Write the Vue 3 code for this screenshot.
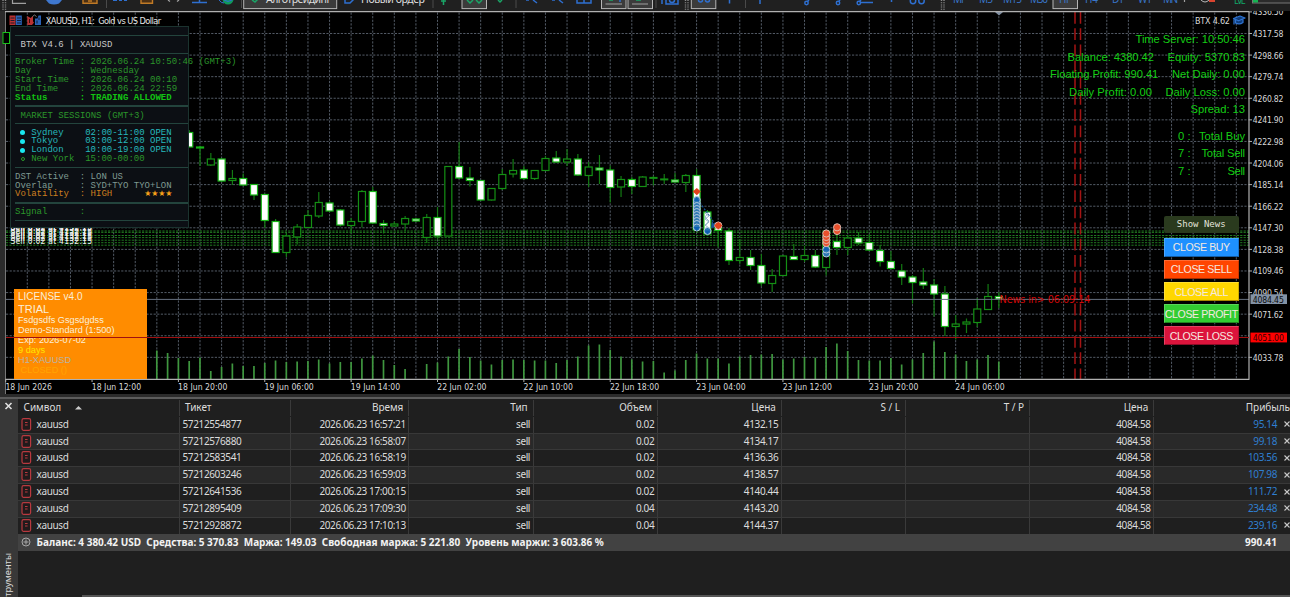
<script setup>
const GRID = 21.59
const LEFT = 5.7
const STEP = GRID / 2
const vLines = Array.from({ length: 57 }, (_, k) => LEFT + GRID * (k + 1))
const hLines = Array.from({ length: 17 }, (_, k) => 11.9 + GRID * k).slice(1)

const priceLabels = [
  '4336.50', '4317.58', '4298.66', '4279.74', '4260.82', '4241.90', '4222.98', '4204.06', '4185.14',
  '4166.22', '4147.30', '4128.38', '4109.46', '4090.54', '4071.62', '', '4033.78',
].map((text, k) => ({ text, y: 11.9 + GRID * k })).filter((p) => p.text)

const timeLabels = [
  '18 Jun 2026', '18 Jun 12:00', '18 Jun 20:00', '19 Jun 06:00', '19 Jun 14:00', '22 Jun 02:00',
  '22 Jun 10:00', '22 Jun 18:00', '23 Jun 04:00', '23 Jun 12:00', '23 Jun 20:00', '24 Jun 06:00',
].map((text, k) => ({ text, x: LEFT + GRID * 4 * k, w: k ? 49.3 : 46.5 }))

// [filled, high, bodyTop, bodyBottom, low]
const candles = [
  [1, 130, 132.5, 147, 147], [1, 146, 147, 148, 166], [0, 153, 159, 165, 166], [1, 158.5, 159, 181, 182],
  [0, 170, 178.5, 180.5, 185], [1, 173.5, 178.5, 185, 186], [1, 184, 184.5, 195, 200], [1, 194, 194.5, 220.5, 228],
  [1, 219, 221.5, 252.5, 253], [0, 233, 236, 252.5, 257], [0, 224, 227, 237, 244.5], [0, 210, 215.5, 227.5, 228],
  [0, 192, 202.5, 216, 218], [1, 201, 203, 211, 212], [1, 209, 210, 225, 226.5], [0, 218, 221.5, 225.5, 233.5],
  [0, 190, 191.5, 221.5, 227.5], [1, 187, 191.5, 223, 224], [1, 220, 223.5, 225.5, 233.5], [0, 221.5, 224, 226, 226.5],
  [0, 216, 218.5, 224, 231], [1, 218, 219, 221, 221.5], [0, 214, 217.5, 237.5, 243], [1, 207, 217.5, 236, 239],
  [0, 166, 166.5, 236, 236], [1, 142, 166.5, 178, 179], [1, 167, 178, 180.5, 186.5], [1, 180, 180.5, 200, 200.5],
  [0, 188, 188.5, 200, 200.5], [0, 169, 174.5, 188.5, 190], [0, 159, 170.5, 174, 177.5], [1, 166, 170, 178.5, 180],
  [0, 170, 170.5, 178.5, 180], [0, 156, 158.5, 170.5, 171], [1, 151, 158, 162, 163], [0, 149, 159, 162, 166],
  [1, 154, 159, 175, 176], [0, 162, 167, 175.5, 187], [1, 155, 168, 170, 184], [1, 165.5, 170, 187.5, 202.5],
  [0, 176, 179.5, 187, 197], [1, 177, 179.5, 186.5, 194], [0, 176, 177, 186.5, 187], [0, 176, 177.5, 178.3, 185.5],
  [0, 174, 179, 179.8, 184], [1, 173, 180, 182, 182.5], [0, 174, 175.5, 182.5, 192], [1, 169, 175.5, 230, 230],
  [1, 210, 212, 234, 235], [1, 225, 228, 230.5, 247.5], [1, 228, 231, 260.5, 265], [0, 239, 257.5, 260.5, 264],
  [1, 250, 257.5, 265.5, 270], [1, 254, 265.5, 283, 286], [0, 269, 275.5, 283.5, 292], [0, 255, 256, 275.5, 276],
  [1, 244, 256.5, 259.5, 260], [0, 246, 255.5, 259.5, 262], [1, 250, 255.5, 267, 268], [0, 230, 240, 267.5, 275.5],
  [1, 234, 241.5, 247.5, 255], [0, 235, 238, 247.5, 255], [1, 232, 238, 243, 245], [1, 234, 242.5, 250, 251],
  [1, 245, 250.5, 261.5, 266.5], [1, 251, 261.5, 268.5, 269], [1, 264, 271, 277, 285], [1, 275, 277, 282.5, 303.5],
  [1, 268, 282, 285, 289], [1, 279, 285, 294, 316.5], [1, 286, 294, 326.5, 336], [0, 315, 324, 326.5, 339.5],
  [0, 318.5, 322, 324, 333], [0, 298, 309, 322.5, 327], [0, 284, 296.5, 309.5, 310], [1, 292, 296.5, 299, 308],
].map(([fill, hi, top, bot, lo], i) => ({ fill, hi, top, bot, lo, x: 189.25 + STEP * i }))

const volumes = [
  350.5, 353, 358, 361, 357.5, 371, 367, 363.5, 366, 366, 363, 360.5, 362, 361.5, 361, 359.5, 363.5, 362, 362,
  358.5, 355.5, 360, 365, 369, 379, 364, 362.5, 356.5, 349, 357, 360.5, 364.5, 360, 359.5, 360, 360.5, 360.5, 363,
  360, 356.5, 345.5, 344.5, 350, 356.5, 359.5, 361.5, 361, 372.5, 370.5, 360, 353.5, 358.5, 358.5, 363.5, 356.5,
  355, 354.5, 354, 359.5, 358.5, 357, 357.5, 347, 343.5, 351, 360, 360.5, 360.5, 358, 364.5, 359.5, 353, 341.5,
  352, 354.5, 361, 359.5, 355, 361.5,
].map((y, i) => ({ y, x: 156.8 + STEP * i }))

const levels = [231, 232.4, 235.5, 237.6, 240.2, 242.7, 245.2]

const blueMarks = [
  ...[200, 203, 206, 209, 212, 215, 218, 221, 224, 227.5].map((y) => ({ x: 696.8, y })),
  { x: 707.5, y: 231 }, { x: 826.3, y: 253.5 }, { x: 826.3, y: 249.5 },
]
const redMarks = [
  ...[243, 240, 237, 233.5].map((y) => ({ x: 826.3, y })),
  { x: 837.1, y: 231 }, { x: 837.1, y: 227.3 }, { x: 718.3, y: 225.6 },
]

const stats = [
  ['Time Server: 10:50:46', 1135.5, 1245, 39], ['Balance: 4380.42', 1067.5, 1154, 56.6],
  ['Equity: 5370.83', 1167.5, 1245, 56.6], ['Floating Profit: 990.41', 1050, 1158.3, 74.2],
  ['Net Daily: 0.00', 1172, 1245, 74.2], ['Daily Profit: 0.00', 1069, 1152, 91.8],
  ['Daily Loss: 0.00', 1165.5, 1245, 91.8], ['Spread: 13', 1190.5, 1245, 109.4],
  ['0 :', 1178, 1190.5, 135.6], ['Total Buy', 1199, 1245, 135.6], ['7 :', 1178, 1190.5, 153.2],
  ['Total Sell', 1201.5, 1245, 153.2], ['7 :', 1178, 1190.5, 170.8], ['Sell', 1227.5, 1245, 170.8],
].map(([text, x, end, y]) => ({ text, x, w: end - x, y: y + 4 }))

const timeframes = [
  ['M1', 953, 12], ['M5', 979, 14], ['M15', 1003, 19], ['M30', 1030, 18], ['H1', 1059, 11],
  ['H4', 1085, 13], ['D1', 1112, 12], ['W1', 1138, 14], ['MN', 1163, 15],
]

const field = (label, value) => label.padEnd(12) + ': ' + value
const chartTitle = 'XAUUSD, H1:  Gold vs US Dollar'
const brokerLines = [
  field('Broker Time', '2026.06.24 10:50:46 (GMT+3)'), field('Day', 'Wednesday'),
  field('Start Time', '2026.06.24 00:10'), field('End Time', '2026.06.24 22:59'),
]
const statusLine = field('Status', 'TRADING ALLOWED')
const dstLines = [field('DST Active', 'LON US'), field('Overlap', 'SYD+TYO TYO+LON')]
const volatilityLine = field('Volatility', 'HIGH')
const signalLine = field('Signal', '')
const totals = [
  'Баланс: 4 380.42 USD', 'Средства: 5 370.83', 'Маржа: 149.03', 'Свободная маржа: 5 221.80', 'Уровень маржи: 3 603.86 %',
].join('  ')

const sessions = [
  { name: 'Sydney', hours: '02:00-11:00 OPEN', open: true },
  { name: 'Tokyo', hours: '03:00-12:00 OPEN', open: true },
  { name: 'London', hours: '10:00-19:00 OPEN', open: true },
  { name: 'New York', hours: '15:00-00:00', open: false },
]

const actions = [
  ['CLOSE BUY', 'blue'], ['CLOSE SELL', 'orange'], ['CLOSE ALL', 'yellow'], ['CLOSE PROFIT', 'green'], ['CLOSE LOSS', 'crimson'],
]

const headers = ['Символ', 'Тикет', 'Время', 'Тип', 'Объем', 'Цена', 'S / L', 'T / P', 'Цена', 'Прибыль']
const rows = [
  ['57212554877', '2026.06.23 16:57:21', '0.02', '4132.15', '95.14'],
  ['57212576880', '2026.06.23 16:58:07', '0.02', '4134.17', '99.18'],
  ['57212583541', '2026.06.23 16:58:19', '0.02', '4136.36', '103.56'],
  ['57212603246', '2026.06.23 16:59:03', '0.02', '4138.57', '107.98'],
  ['57212641536', '2026.06.23 17:00:15', '0.02', '4140.44', '111.72'],
  ['57212895409', '2026.06.23 17:09:30', '0.04', '4143.20', '234.48'],
  ['57212928872', '2026.06.23 17:10:13', '0.04', '4144.37', '239.16'],
]
</script>

<template>
  <div class="app">
    <svg class="toolbar" width="1290" height="11" viewBox="0 0 1290 11">
      <g fill="none" stroke="#8c8c8c" stroke-width="1.4" stroke-dasharray="1 1.2">
        <path d="M3 0V10M5.5 0V10M685.5 0V10M688 0V10M941.5 0V10M944 0V10" />
      </g>
      <path d="M106.5 0V8M241.5 0V8M433 0V8M516 0V8M656 0V8M745.5 0V8" stroke="#4a4a4a" />
      <g fill="#3b3b3b" stroke="#b5b5b5">
        <rect x="243.7" y="-3" width="93" height="11.6" />
        <rect x="462" y="-3" width="24.5" height="11.6" />
        <rect x="601.5" y="-3" width="24.5" height="11.6" />
        <rect x="628" y="-3" width="24.5" height="11.6" />
        <rect x="691.3" y="-3" width="24.5" height="11.6" />
        <rect x="1053" y="-3" width="24.5" height="11.6" />
      </g>
      <g fill="none" stroke="#a0a0a0" stroke-width="1.2">
        <path d="M12.5 0V3.3H26M168 0l2 1.5M179 0l-2 1.5M605.5 4H622M632 4H648M1184.5 0V2" />
      </g>
      <path d="M46 0H62L59 3.5Q54 5.5 49 3.5Z" fill="#3f78cf" />
      <g fill="#4c3013" stroke="#c07a26" stroke-width="1.4">
        <path d="M83 -2H97V3.3H83ZM141 -2H152.5V3.3H141ZM88 1H92" />
      </g>
      <g fill="none" stroke="#2e6fd0" stroke-width="1.5">
        <path d="M113 .3H117M119 .3H122M124 .3H127M192 2.5H207M199.5 0V2.5M345 -2V3H350L355 -2M526 0H529M533 0l4 3M552 0H555M559 0l4 3M577 -2V3H591V-2M584 -2V3M620 0V2M662 0V4M666 -2V4H678V-2ZM729.5 0V3.5M760 0V4M860 2.5H873M891.5 0V2" />
        <circle cx="672" cy="0" r="2.5" /><circle cx="700.5" cy="0" r="2" /><circle cx="707.5" cy="0" r="2" />
        <circle cx="806.5" cy="3" r="1.7" /><path d="M807.5 1.5L809 0M838.8 1.5L840 0M859.5 1.5L861 0" />
        <circle cx="838" cy="3" r="1.7" /><circle cx="858.8" cy="3" r="1.7" />
        <circle cx="913" cy="1" r="2.7" /><circle cx="921.5" cy="1" r="2.7" />
      </g>
      <g fill="none" stroke="#1aa567" stroke-width="1.5">
        <path d="M252 0L255 2L258 -1M441 1H446M443.5 0V5M467 0l3 3l3 -3M476 0l3 3l3 -3M498 0l2 2l2 -2M609 0H613M636 0H641M651 0" />
      </g>
      <circle cx="228" cy="-1" r="5.5" fill="#10985d" /><path d="M219 0q2 3 5 3M224 0q4 3 8 0" fill="none" stroke="#2e6fd0" />
      <path d="M1201 0q4 4 8 0" fill="none" stroke="#b7b7b7" /><path d="M1209 1H1215" stroke="#d9442f" stroke-width="2" />
      <rect x="1252.5" y="-3" width="44" height="6" fill="#2b2b2b" stroke="#777" /><rect x="1253" y="0" width="5" height="2.5" fill="#16b452" />
      <g class="ui-text">
        <text x="266" y="3" textLength="65" fill="#dedede" font-size="10.5">Алготрейдинг</text>
        <text x="361" y="3" textLength="64" fill="#dedede" font-size="10.5">Новый ордер</text>
        <text v-for="[t, x, w] in timeframes" :key="t" :x="x" y="2.6" :textLength="w" fill="#3975c8" font-size="10">{{ t }}</text>
        <text x="1234" y="3.5" textLength="11.5" fill="#12a868" font-size="9">LVL</text>
      </g>
    </svg>

    <section class="chart">
      <svg class="plot" width="1290" height="386" viewBox="0 11 1290 386">
        <g class="grid">
          <line v-for="x in vLines" :key="x" :x1="x" :x2="x" y1="12.5" y2="379" />
          <line v-for="y in hLines" :key="y" x1="6" x2="1249" :y1="y" :y2="y" />
        </g>
        <g stroke="#217a21" stroke-width="1" stroke-dasharray="2.2 1.2">
          <line v-for="y in levels" :key="y" x1="6" x2="1249" :y1="y" :y2="y" />
        </g>
        <g stroke="#3f973f" stroke-width="1.7">
          <line v-for="v in volumes" :key="v.x" :x1="v.x" :x2="v.x" :y1="v.y" y2="379" />
        </g>
        <g stroke="#137a13" stroke-width="1.2">
          <g v-for="c in candles" :key="c.x">
            <line :x1="c.x" :x2="c.x" :y1="c.hi" :y2="c.lo" />
            <rect :x="c.x - 3.5" :y="c.top" width="7" :height="c.bot - c.top" :fill="c.fill ? '#fff' : '#000'" :stroke="c.fill ? '#18b418' : '#149014'" />
          </g>
        </g>
        <rect x="3" y="32.5" width="6.5" height="11" fill="#000" stroke="#19c019" />
        <line x1="6" x2="1249" y1="299.4" y2="299.4" stroke="#667080" />
        <g stroke="#a51414" stroke-width="1.5" stroke-dasharray="11.8 4.4">
          <line x1="1075" x2="1075" y1="12" y2="379" /><line x1="1080.5" x2="1080.5" y1="12" y2="379" />
        </g>
        <path d="M698 200L718 228" stroke="#17559a" stroke-width="1.2" stroke-dasharray="2 1.5" />
        <path d="M712 221l4 6l-5 1z" fill="#17559a" />
        <path d="M705 213l4 3l-4 3l4 3l-4 3l4 3M709 212l-4 5l4 4l-4 5" fill="none" stroke="#8eacc8" stroke-width=".9" />
        <g fill="#2d78b4" stroke="#b7cbdc" stroke-width="1">
          <circle v-for="m in blueMarks" :key="m.x + '-' + m.y" :cx="m.x" :cy="m.y" r="3.5" />
        </g>
        <g fill="#0c60b4">
          <path d="M696.8 197l3 4h-6zM693.8 227h6l-3 4zM704.5 230.5h6l-3 4zM826.3 246.5l3.5 4h-7z" />
        </g>
        <g fill="#e9502c" stroke="#dcb9ae" stroke-width="1">
          <circle v-for="m in redMarks" :key="m.x + '-' + m.y" :cx="m.x" :cy="m.y" r="3.6" />
        </g>
        <path d="M696.8 188l4 3.5l-4 3.7l-4-3.7zM718.3 222l4 3.5l-4 3.7l-4-3.7z" fill="#e2421c" />
        <path d="M995 12H1003L999 15.5Z" fill="#7f8ea1" />
        <g class="tahoma" fill="#d8d8d8" font-size="8.6">
          <text v-for="y in levels" :key="y" x="10.5" :y="y - 1.5" textLength="81.5" font-size="8.5" fill="#f0f0f0">Sell 0.02 at 4132.15</text>
          <text class="keep" x="45.7" y="23.9" textLength="115.5" font-size="9.2" fill="#e6e6e6">{{ chartTitle }}</text>
          <text x="1195" y="23.9" textLength="35" font-size="9">BTX 4.62</text>
          <text v-for="p in priceLabels" :key="p.y" x="1252.8" :y="p.y + 3.5" textLength="30.7">{{ p.text }}</text>
          <text v-for="t in timeLabels" :key="t.x" :x="t.x - .3" y="389.5" :textLength="t.w">{{ t.text }}</text>
          <text x="999.5" y="303" textLength="91" font-size="10.8" fill="#d00808">News in&gt; 06:09:14</text>
        </g>
        <g stroke="#b0b0b0" stroke-width="1">
          <line v-for="p in priceLabels" :key="p.y" x1="1249" x2="1252" :y1="p.y" :y2="p.y" />
          <line v-for="t in timeLabels" :key="t.x" :x1="t.x" :x2="t.x" y1="379" y2="382" />
          <path d="M5.5 379.3H1249.5M1249 11.5V379.3M5 11.6H1249" fill="none" stroke-width="1.2" />
        </g>
        <g class="tahoma" font-size="8.6">
          <rect x="1250.5" y="294.3" width="36.5" height="9.7" fill="#8292a6" />
          <text x="1252.8" y="302.7" textLength="31" fill="#0b0b0b">4084.45</text>
          <rect x="1250.5" y="332.6" width="36.5" height="9.8" fill="#ff0000" />
          <text x="1252.8" y="341" textLength="31" fill="#300">4051.00</text>
        </g>
        <g class="arial" fill="#14cd14" font-size="11.2">
          <text v-for="s in stats" :key="s.text + s.y" :x="s.x" :y="s.y" :textLength="s.w">{{ s.text }}</text>
        </g>
        <!-- window icons -->
        <rect x="9.5" y="15.5" width="6" height="9.5" fill="#b93131" /><rect x="15.8" y="15.5" width="6" height="9.5" fill="#2a62b5" />
        <path d="M10.5 18H14.5M10.5 20.5H14.5M10.5 23H14.5M17 18H21M17 20.5H21M17 23H21" stroke="#10182a" stroke-width=".9" />
        <path d="M27.3 16V25H32L34 22.5L33 21.5V16L30.5 18Z" fill="#b93131" /><path d="M29.5 19V23" stroke="#3a0c0c" />
        <path d="M35 18.5H37.5L38.5 15.5H41V25H35Z" fill="#2a62b5" /><path d="M37 20.5V23.5M39 17.5V20" stroke="#0c1a33" />
        <path d="M32.5 16.5l2 -1.5l2 1.5" fill="none" stroke="#888" stroke-width=".9" />
        <g fill="#0f3d7c" stroke="#2f74d2" stroke-width="1.2" stroke-linejoin="round">
          <path d="M1233.5 18.5L1240 16L1245 18L1238.5 20.8ZM1235.5 20v3q4 2 7.5-.5V19.5M1234 19v5.5" />
        </g>
      </svg>

      <div class="info mono">
        <i class="rule r1"></i>
        <p class="title">BTX V4.6 | XAUUSD</p>
        <i class="rule"></i>
        <div class="block broker">
          <p v-for="line in brokerLines" :key="line">{{ line }}</p>
          <p class="allowed">{{ statusLine }}</p>
        </div>
        <i class="rule"></i>
        <p class="title lime">MARKET SESSIONS (GMT+3)</p>
        <i class="rule"></i>
        <div class="block sess">
          <p v-for="s in sessions" :key="s.name" :class="{ open: s.open }"><b class="dot"></b><span class="name">{{ s.name }}</span>{{ s.hours }}</p>
        </div>
        <i class="rule"></i>
        <div class="block dst">
          <p v-for="line in dstLines" :key="line">{{ line }}</p>
          <p class="vol"><span>{{ volatilityLine }}</span><span class="stars">★★★★</span></p>
        </div>
        <i class="rule thick"></i>
        <p class="signal">{{ signalLine }}</p>
        <i class="rule thick"></i>
      </div>

      <div class="license">
        <p class="l1">LICENSE v4.0</p>
        <p class="l2">TRIAL</p>
        <p>Fsdgsdfs Gsgsdgdss</p>
        <p>Demo-Standard (1:500)</p>
        <p>Exp: 2026-07-02</p>
        <p class="days">9 days</p>
        <p class="sym">H1-XAUUSD</p>
        <p class="closed">CLOSED ()</p>
      </div>
      <div class="stop-line"></div>

      <div class="actions">
        <button class="news">Show News</button>
        <button v-for="[label, tone] in actions" :key="label" :class="tone">{{ label }}</button>
      </div>
    </section>

    <section class="terminal">
      <aside>
        <svg width="18" height="18" viewBox="0 0 18 18"><path d="M5.5 4L11.5 10M11.5 4L5.5 10" stroke="#e0e0e0" stroke-width="1.6" /></svg>
        <span>Инструменты</span>
      </aside>
      <div class="table">
        <div class="row head">
          <span v-for="(h, i) in headers" :key="i">{{ h }}<svg v-if="i === 0" class="sort" width="7" height="4"><path d="M0 3.5L3.5 0L7 3.5Z" fill="#ccc" /></svg></span>
        </div>
        <div v-for="r in rows" :key="r[0]" class="row">
          <span>
            <svg class="doc" width="11" height="14" viewBox="0 0 11 14"><rect x="1" y=".7" width="8.6" height="11.6" rx="1.5" fill="#211a1b" stroke="#b8393f" stroke-width="1.2" /><path d="M4 4.5H6.6M4 7H6.6" stroke="#b8393f" /></svg>
            xauusd
          </span>
          <span>{{ r[0] }}</span><span>{{ r[1] }}</span><span>sell</span><span>{{ r[2] }}</span><span>{{ r[3] }}</span>
          <span></span><span></span><span>4084.58</span>
          <span class="profit">{{ r[4] }}<svg width="6" height="7" viewBox="0 0 6 7"><path d="M.5 .5L5.5 5.5M5.5 .5L.5 5.5" stroke="#c8c8c8" stroke-width="1.1" /></svg></span>
        </div>
        <div class="summary">
          <svg width="10" height="10" viewBox="0 0 10 10"><circle cx="5" cy="5" r="4" fill="none" stroke="#a8a8a8" /><path d="M5 2.5V7.5M2.5 5H7.5" stroke="#a8a8a8" /></svg>
          <b class="totals">{{ totals }}</b>
          <b class="sum">990.41</b>
        </div>
        <div class="tabs"></div>
      </div>
    </section>
  </div>
</template>

<style>
body { background: #1f1f1f; overflow: hidden; }
</style>

<style scoped>
.app { width: 1290px; height: 597px; overflow: hidden; background: #2b2b2b; display: flex; flex-direction: column; }
p { margin: 0; white-space: pre; }
.keep { white-space: pre; }
.toolbar { display: block; flex: none; background: #202020; border: 0; }
.ui-text, .terminal { font-family: "Noto Sans", "Open Sans", sans-serif; }
.tahoma { font-family: "DejaVu Sans Condensed", "DejaVu Sans", sans-serif; }
.arial, .license, .actions { font-family: "Liberation Sans", Arial, sans-serif; }
.mono { font-family: "Liberation Mono", "Courier New", monospace; }

.chart { position: relative; flex: none; height: 383px; margin-left: 5px; background: #000; border-left: 1px solid #777; box-sizing: border-box; }
.plot { position: absolute; left: -6px; top: 0; }
.grid line { stroke: #535b66; stroke-width: 1; stroke-dasharray: 2.2 1.4; }

.info { position: absolute; left: 3.5px; top: 15px; width: 179.5px; height: 201.5px; box-sizing: border-box; background: #0c0f14; border: 1px solid #1b332f; padding-left: 4.5px; font-size: 9px; line-height: 8.8px; color: #2b962b; display: flex; flex-direction: column; }
.info p { height: 8.8px; }
.rule { flex: none; height: 1.2px; background: #23443d; }
.rule.thick { height: 1.8px; }
.r1 { margin-top: 8px; }
.info .title { padding-left: 5.5px; height: 16.6px; line-height: 18px; color: #c8c8c8; flex: none; }
.info .lime { color: #2b962b; }
.block { flex: none; }
.broker { padding-top: 4.5px; height: 47px; }
.info .allowed { color: #12c412; font-weight: bold; }
.sess { padding-top: 4.2px; height: 38.6px; }
.sess p { display: flex; color: #2b962b; }
.sess .open { color: #26b9bd; }
.dot { width: 4px; height: 4px; box-sizing: border-box; border: 1px solid #2b962b; border-radius: 50%; margin: 2px 6.5px 0 5.7px; }
.open .dot { width: 5px; height: 5px; margin: 1.5px 6px 0 5.2px; background: #19e8f0; border: 0; }
.name { width: 54px; }
.dst { padding-top: 4.3px; height: 29.5px; color: #7f9a92; }
.info .vol { color: #cd7f1f; display: flex; }
.stars { margin-left: 32px; font-family: "DejaVu Sans", sans-serif; font-size: 8px; letter-spacing: -.2px; color: #f5a11a; }
.info .signal { height: 15.5px; line-height: 16px; }

.license { position: absolute; left: 7.5px; top: 277.5px; width: 133.5px; height: 90.5px; box-sizing: border-box; padding: 2.5px 0 0 4.5px; background: #ff8c00; color: #fbeed8; font-size: 9.2px; line-height: 10px; }
.license .l1 { font-size: 10px; line-height: 11.6px; }
.license .l2 { font-size: 11px; line-height: 12.4px; }
.license .days { color: #ffe600; }
.license .sym { color: #b9b3a5; }
.license .closed { color: #ffa400; padding-left: 2.5px; }
.stop-line { position: absolute; left: 0; width: 1243px; top: 325.8px; height: 1px; background: #a01010; }

.actions { position: absolute; left: 1158px; top: 205px; width: 74.5px; display: flex; flex-direction: column; gap: 3.2px; }
button { height: 19px; padding: 0; border: 1px solid; border-color: rgba(255,255,255,.2) rgba(0,0,0,.2) rgba(0,0,0,.35) rgba(255,255,255,.2); color: #f5e9e0; font: 10.6px/16px "Liberation Sans", Arial, sans-serif; letter-spacing: -.4px; white-space: nowrap; display: flex; justify-content: center; align-items: center; }
.news { height: 16.5px; margin-bottom: 2px; background: #2a3a1e; border: 0; border-radius: 2px; color: #e2e4da; font: 9px/16px "DejaVu Sans Mono", monospace; letter-spacing: 0; }
.blue { background: #1e90ff; }
.orange { background: #ff4500; }
.yellow { background: #ffd700; }
.green { background: #32cd32; }
.crimson { background: #dc143c; }

.terminal { flex: 1; margin-top: 3px; border-top: 2px solid #5c5c5c; display: flex; background: #1f1f1f; color: #dcdcdc; font-size: 10px; letter-spacing: -.37px; min-height: 0; }
aside { width: 18px; flex: none; background: #383838; position: relative; }
aside span { position: absolute; left: 1px; top: 154px; writing-mode: vertical-rl; transform: rotate(180deg); font-size: 9.3px; line-height: 14px; letter-spacing: 0; }
.table { flex: 1; min-width: 0; display: flex; flex-direction: column; }
.row { display: grid; grid-template-columns: 162px 111px 118.3px 124.3px 124.2px 124px 124.2px 124px 124.2px 1fr; height: 16.83px; box-sizing: border-box; border-top: 1px solid #383838; line-height: 15.8px; }
.row:nth-child(odd) { background: #292929; }
.row.head, .row:nth-child(2) { border-color: transparent; background: #1f1f1f; }
.row.head { height: 16.8px; letter-spacing: -.05px; }
.row > span { border-right: 1px solid #3a3a3a; padding-right: 2.5px; text-align: right; white-space: nowrap; }
.row.head > span { padding-right: 5px; }
.row > span:nth-child(1) { text-align: left; display: flex; align-items: center; padding-left: 2.5px; gap: 5px; letter-spacing: -.35px; }
.row.head > span:nth-child(1) { padding-left: 5.5px; gap: 14px; letter-spacing: 0; }
.row > span:nth-child(2) { text-align: left; padding-left: 2.5px; }
.row.head > span:nth-child(2) { padding-left: 5px; }
.row > span:last-child { border: 0; padding-right: 0; }
.row.head > span:last-child { padding-right: 0; }
.row > .profit { color: #2f7fd0; display: flex; justify-content: flex-end; align-items: center; gap: 7px; }
.summary { flex: none; height: 17px; background: #424242; display: flex; align-items: center; padding: 0 13px 0 3px; color: #f2f2f2; }
.totals { margin-left: 5.5px; white-space: pre; letter-spacing: 0; }
.sum { margin-left: auto; letter-spacing: .1px; }
.tabs { margin-top: auto; height: 2px; background: #555; margin-left: 64px; }
</style>
